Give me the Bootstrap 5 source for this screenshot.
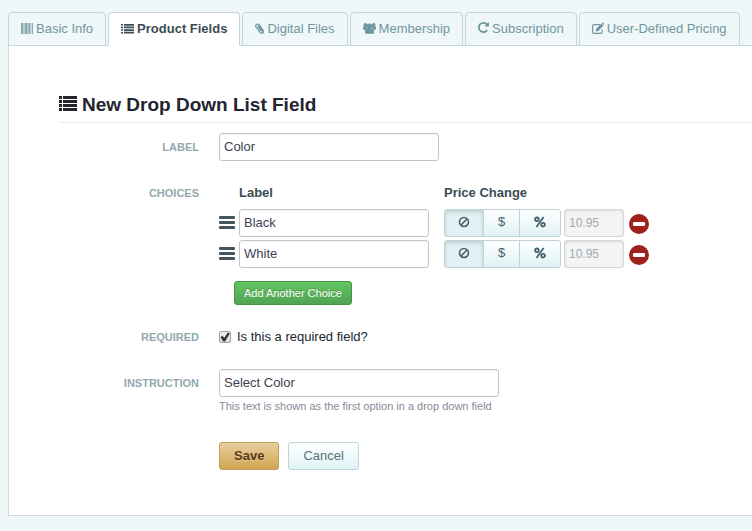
<!DOCTYPE html>
<html lang="en">
<head>
<meta charset="utf-8">
<meta name="viewport" content="width=device-width, initial-scale=1">
<title>Product Fields</title>
<link href="https://cdn.jsdelivr.net/npm/bootstrap@5.3.0/dist/css/bootstrap.min.css" rel="stylesheet">
<style>
body { font: 13px/18px "Liberation Sans", Arial, sans-serif; color: #22242f; background: #eff7f9; }
.page { padding: 12px 0 15px 8px; }
.product-tabs { gap: 2px; border-bottom: 1px solid #c3d6da; }
.product-tabs .nav-link { padding: 7px 12px; height: 34px; margin-bottom: -1px; color: #6f969e; border: 1px solid #c3d6da; border-radius: 4px 4px 0 0; background: #eff7f9; white-space: nowrap; display: flex; align-items: center; gap: 3px; }
.product-tabs .nav-link.active { color: #3a4d55; background: #fff; border-color: #c3d6da #c3d6da #fff; font-weight: bold; }
.panel { background: #fff; border: solid #d0d9dc; border-width: 0 0 1px 1px; padding: 46px 0 45px 50px; }
svg { display: block; flex: none; fill: currentColor; }
.title { font-size: 19px; line-height: 25px; font-weight: bold; gap: 5px; border-bottom: 1px solid #e9ecec; padding-bottom: 5px; margin-bottom: 10px; }
.form-line { display: grid; grid-template-columns: 140px minmax(0, 1fr); column-gap: 20px; }
.form-line + .form-line { margin-top: 18px; }
.caption { font-size: 11px; line-height: 28px; font-weight: bold; color: #93a9ae; text-align: right; text-transform: uppercase; }
.form-control { height: 28px; min-height: 28px; padding: 2px 4px 4px; font-size: 13px; line-height: 20px; color: #40414f; border: 1px solid #c2c5c8; border-radius: 3px; box-shadow: inset 0 1px 1px #0000000d; }
.w-field { width: 220px; } .w-wide { width: 280px; } .w-choice { width: 190px; } .w-price { width: 60px; }
.form-control:disabled { padding: 3px 4px; color: #9faab0; background: #f4f4f4; border-color: #d3d7d9; box-shadow: inset 0 1px 3px #0000001a; font-size: 12px; }
.choice-grid { display: grid; grid-template-columns: 20px 190px auto 60px auto; justify-content: start; align-items: center; row-gap: 3px; }
.choice-grid .heading { line-height: 27px; font-weight: bold; color: #3a4d55; }
.price-head { grid-column: 3 / 6; margin-left: 15px; }
.choice-row { display: contents; }
.handle { color: #43565d; }
.price-type { margin: 0 3px 0 15px; }
.price-type .btn { height: 28px; padding: 0 12px 2px; font-size: 13px; line-height: 20px; color: #45626b; background: linear-gradient(#fff, #e0f1f4); border: 1px solid #bdd3d8; border-radius: 3px; display: flex; align-items: center; justify-content: center; }
.price-type .btn:nth-of-type(1) { width: 40px; } .price-type .btn:nth-of-type(2) { width: 37px; } .price-type .btn:nth-of-type(3) { width: 42px; }
.price-type .btn-check:checked + .btn { color: #45626b; background: #e2f1f4; border-color: #bdd3d8; box-shadow: inset 0 2px 4px #00000026; }
.remove { border: 0; padding: 0; margin: 2px 0 0 5px; background: none; color: #9e211d; }
.btn-add { margin: 13px 0 0 15px; height: 24px; padding: 0 9px; font-size: 11px; line-height: 20px; color: #fff; border: 1px solid #46963f; border-radius: 3px; background: linear-gradient(#62c462, #51a351); text-shadow: 0 -1px 0 #00000033; }
.tick { appearance: none; width: 12px; height: 12px; margin: 0 6px 0 0; border: 1px solid #a2a2a2; border-radius: 2px; background: linear-gradient(#eee, #ddd); display: grid; place-items: center; }
.tick:checked::before { content: ""; width: 10px; height: 10px; background: #333; clip-path: polygon(5% 52%, 25% 38%, 42% 60%, 78% 4%, 98% 16%, 50% 95%, 34% 95%); }
.hint { font-size: 11px; line-height: 18px; color: #888999; }
.actions { gap: 9px; margin-top: 27px; }
.btn-form { height: 28px; padding: 0 14px; font-size: 13px; line-height: 20px; border-radius: 3px; }
.btn-save, .btn-save:hover { color: #5a3a16; font-weight: bold; background: linear-gradient(#e9cf9f, #d0a552); border: 1px solid #c09c60; text-shadow: 0 1px 0 #ffffff40; }
.btn-cancel, .btn-cancel:hover { color: #56737c; background: linear-gradient(#fff, #e0f2f5); border: 1px solid #bdd5da; }
</style>
</head>
<body>
<svg width="0" height="0" class="d-none" aria-hidden="true">
<symbol id="list" viewBox="0 1 18 18"><path d="M0 1h3v3H0zM4 1h14v3H4zM0 5h3v3H0zM4 5h14v3H4zM0 9h3v3H0zM4 9h14v3H4zM0 13h3v3H0zM4 13h14v3H4z"/></symbol>
<symbol id="grip" viewBox="0 0 16 13"><rect width="16" height="3" rx="1"/><rect y="5" width="16" height="3" rx="1"/><rect y="10" width="16" height="3" rx="1"/></symbol>
<symbol id="none" viewBox="0 0 12 12"><path fill="none" stroke="currentColor" stroke-width="1.6" d="M10.5 6a4.5 4.5 0 1 1-9 0 4.5 4.5 0 0 1 9 0zM2.8 9.2l6.4-6.4"/></symbol>
<symbol id="percent" viewBox="0 0 12 12"><path fill="none" stroke="currentColor" stroke-width="1.8" d="M9.600 1 2.400 11M4.700 3.300a1.800 1.800 0 1 1-3.600 0 1.800 1.800 0 0 1 3.600 0zM10.900 8.700a1.800 1.800 0 1 1-3.600 0 1.800 1.800 0 0 1 3.600 0z"/></symbol>
<symbol id="minus" viewBox="0 0 20 20"><circle cx="10" cy="10" r="10"/><rect x="4" y="8" width="12" height="4" rx="1" fill="#fff"/></symbol>
</svg>
<div class="page">
<nav class="nav flex-nowrap product-tabs" aria-label="Product sections">
<a class="nav-link" href="#"><svg width="12" height="14" viewBox="0 0 12 14"><path opacity=".8" d="M0 1h2v11H0zM2.500 1h1v11h-1zM4 1h2v11H4zM6.400 1h.8v11h-.8zM7.500 1h1.600v11H7.500zM9.600 1h.7v11h-.7zM11 1h1v11h-1z"/></svg>Basic Info</a>
<a class="nav-link active" aria-current="page" href="#"><svg width="13" height="14" viewBox="0 0 13 14"><path d="M0 2h2v1.500H0zM3 2h10v1.800H3zM0 4.700h2v1.500H0zM3 4.600h10v1.700H3zM0 7.300h2v1.500H0zM3 7.200h10v1.700H3zM0 10h2v1.500H0zM3 9.800h10v1.700H3z"/></svg>Product Fields</a>
<a class="nav-link" href="#"><svg width="9" height="14" viewBox="0 0 9 14"><path fill="none" stroke="currentColor" stroke-width="1.300" stroke-linecap="round" d="M2 6.200l3.200 4.200c.7.900 1.900 1.100 2.600.5.800-.6.800-1.700.1-2.700L4.200 3C3.400 2 2.200 1.800 1.400 2.500c-.9.700-.9 1.900-.1 2.900M3 4.400l3.200 4.300c.4.500 1.100-.1.700-.6L4.200 4.400"/></svg>Digital Files</a>
<a class="nav-link" href="#"><svg width="13" height="14" viewBox="0 0 13 14"><circle cx="2.400" cy="3" r="1.900"/><circle cx="10.600" cy="3" r="1.900"/><circle cx="6.500" cy="4.300" r="2.800"/><path d="M.7 4.300h2.900c.1 1.400.4 2 .9 2.600-.9.100-1.400.5-1.900 1H1.300C.5 7.900 0 7.400 0 6.500c0-1.200.1-2.200.7-2.200zM12.300 4.300H9.400c-.1 1.400-.4 2-.9 2.600.9.100 1.400.5 1.900 1h1.300c.8 0 1.300-.5 1.300-1.400 0-1.200-.1-2.200-.7-2.200zM3.900 6.600h5.200c1.200.3 1.900 1.600 1.900 3.600 0 1-.6 1.600-1.500 1.600h-6c-.9 0-1.500-.6-1.500-1.600 0-2 .7-3.300 1.900-3.600z"/></svg>Membership</a>
<a class="nav-link" href="#"><svg class="mb-1" width="11" height="12" viewBox="128 0 1536 1664"><path d="M1664 256v448q0 26-19 45t-45 19h-448q-42 0-59-40-17-39 14-69l138-138q-148-137-349-137-104 0-198.500 40.500t-163.500 109.500-109.500 163.500-40.500 198.500 40.500 198.500 109.500 163.500 163.500 109.500 198.500 40.500q119 0 225-52t179-147q7-10 23-12 15 0 25 9l137 138q9 8 9.500 20.500t-7.500 22.500q-109 132-264 204.500t-327 72.500q-156 0-298-61t-245-164-164-245-61-298 61-298 164-245 245-164 298-61q147 0 284.500 55.500t244.500 156.500l130-129q29-31 70-14 39 17 39 59z"/></svg>Subscription</a>
<a class="nav-link" href="#"><svg width="12" height="14" viewBox="0 0 12 14"><path fill="none" stroke="currentColor" stroke-width="1.200" d="M8.500 2.600H2.200C1.200 2.600.6 3.200.6 4.200v5.600c0 1 .6 1.600 1.600 1.600h6.400c1 0 1.600-.6 1.600-1.600V7.500"/><path d="M3.900 9.200V7.100L9.300 1.700l2 2-5.400 5.500zM9.800 1.300l.5-.5c.3-.3.600-.2.900 0l.7.800c.3.300.2.600 0 .9l-.2.700z"/></svg>User-Defined Pricing</a>
</nav>
<main class="panel">
<h1 class="title d-flex align-items-center"><svg width="18" height="18"><use href="#list"/></svg>New Drop Down List Field</h1>
<form>
<div class="form-line">
<label class="caption" for="label">Label</label>
<div><input class="form-control w-field" id="label" value="Color"></div>
</div>
<div class="form-line">
<span class="caption">Choices</span>
<div>
<div class="choice-grid">
<span></span><span class="heading">Label</span><span class="heading price-head">Price Change</span>
<div class="choice-row">
<svg class="handle" width="16" height="14"><use href="#grip" height="13"/></svg>
<input class="form-control w-choice" aria-label="Choice 1 label" value="Black">
<div class="btn-group price-type" role="group" aria-label="Choice 1 price change">
<input type="radio" class="btn-check" name="p1" id="p1n" checked><label class="btn" for="p1n" aria-label="None"><svg width="12" height="12"><use href="#none"/></svg></label>
<input type="radio" class="btn-check" name="p1" id="p1d"><label class="btn" for="p1d">$</label>
<input type="radio" class="btn-check" name="p1" id="p1p"><label class="btn" for="p1p" aria-label="Percent"><svg width="12" height="12"><use href="#percent"/></svg></label>
</div>
<input class="form-control w-price" aria-label="Choice 1 price" value="10.95" disabled>
<button type="button" class="remove" aria-label="Remove choice 1"><svg width="20" height="20"><use href="#minus"/></svg></button>
</div>
<div class="choice-row">
<svg class="handle" width="16" height="14"><use href="#grip" height="13"/></svg>
<input class="form-control w-choice" aria-label="Choice 2 label" value="White">
<div class="btn-group price-type" role="group" aria-label="Choice 2 price change">
<input type="radio" class="btn-check" name="p2" id="p2n" checked><label class="btn" for="p2n" aria-label="None"><svg width="12" height="12"><use href="#none"/></svg></label>
<input type="radio" class="btn-check" name="p2" id="p2d"><label class="btn" for="p2d">$</label>
<input type="radio" class="btn-check" name="p2" id="p2p"><label class="btn" for="p2p" aria-label="Percent"><svg width="12" height="12"><use href="#percent"/></svg></label>
</div>
<input class="form-control w-price" aria-label="Choice 2 price" value="10.95" disabled>
<button type="button" class="remove" aria-label="Remove choice 2"><svg width="20" height="20"><use href="#minus"/></svg></button>
</div>
</div>
<button type="button" class="btn btn-add">Add Another Choice</button>
</div>
</div>
<div class="form-line">
<span class="caption">Required</span>
<div class="d-flex align-items-center"><input class="tick" type="checkbox" id="required" checked><label for="required">Is this a required field?</label></div>
</div>
<div class="form-line">
<label class="caption" for="instruction">Instruction</label>
<div>
<input class="form-control w-wide" id="instruction" value="Select Color" aria-describedby="instruction-hint">
<div class="hint" id="instruction-hint">This text is shown as the first option in a drop down field</div>
<div class="d-flex actions">
<button type="submit" class="btn btn-form btn-save">Save</button>
<button type="button" class="btn btn-form btn-cancel">Cancel</button>
</div>
</div>
</div>
</form>
</main>
</div>
<script src="https://cdn.jsdelivr.net/npm/bootstrap@5.3.0/dist/js/bootstrap.bundle.min.js"></script>
</body>
</html>
